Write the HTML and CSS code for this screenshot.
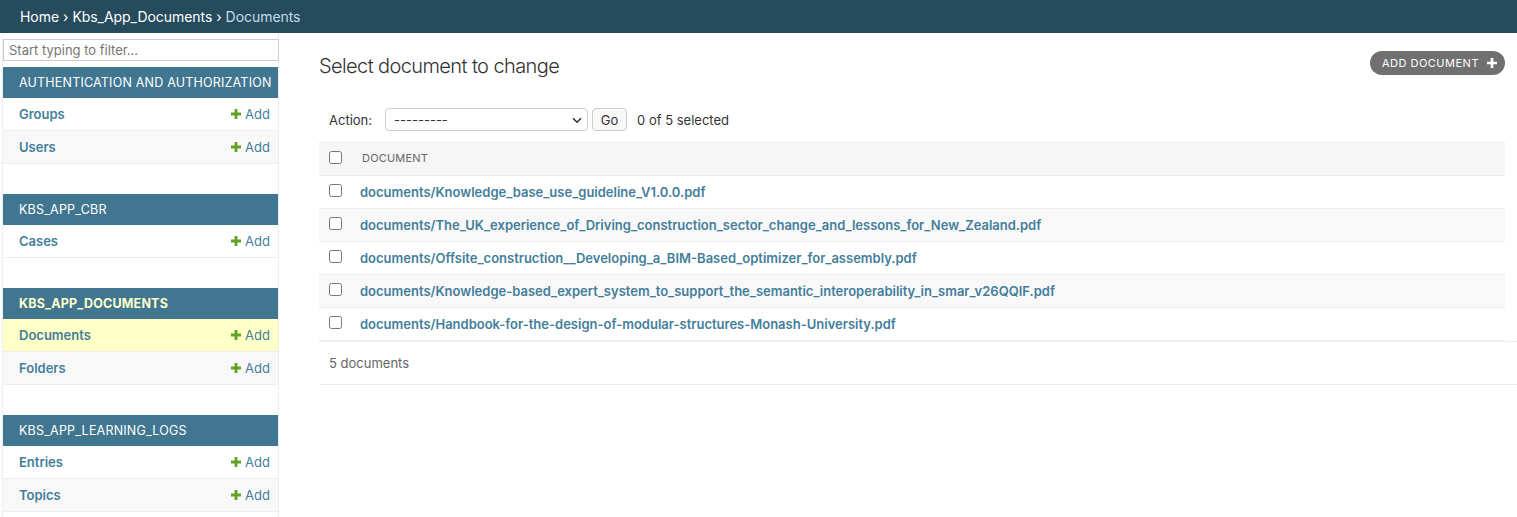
FILE: index.html
```html
<!DOCTYPE html>
<html lang="en">
<head>
<meta charset="utf-8">
<title>Select document to change</title>
<link rel="stylesheet" href="styles.css">
</head>
<body>
<nav class="breadcrumbs">
  <a href="#">Home</a><span class="sep">›</span><a href="#">Kbs_App_Documents</a><span class="sep">›</span><span class="here">Documents</span>
</nav>
<div class="main">
  <aside class="sidebar">
    <input class="nav-filter" type="search" placeholder="Start typing to filter...">
    <table class="module">
      <caption>Authentication and Authorization</caption>
      <tr><th><a href="#">Groups</a></th><td><a class="addlink" href="#"><svg width="10" height="10" viewBox="0 0 10 10"><path d="M3.6 0h2.8v3.6H10v2.8H6.4V10H3.6V6.4H0V3.6h3.6z" fill="#5fa225"/></svg>Add</a></td></tr>
      <tr class="alt"><th><a href="#">Users</a></th><td><a class="addlink" href="#"><svg width="10" height="10" viewBox="0 0 10 10"><path d="M3.6 0h2.8v3.6H10v2.8H6.4V10H3.6V6.4H0V3.6h3.6z" fill="#5fa225"/></svg>Add</a></td></tr>
    </table>
    <table class="module">
      <caption>Kbs_App_Cbr</caption>
      <tr><th><a href="#">Cases</a></th><td><a class="addlink" href="#"><svg width="10" height="10" viewBox="0 0 10 10"><path d="M3.6 0h2.8v3.6H10v2.8H6.4V10H3.6V6.4H0V3.6h3.6z" fill="#5fa225"/></svg>Add</a></td></tr>
    </table>
    <table class="module current-app">
      <caption>Kbs_App_Documents</caption>
      <tr class="current-model"><th><a href="#">Documents</a></th><td><a class="addlink" href="#"><svg width="10" height="10" viewBox="0 0 10 10"><path d="M3.6 0h2.8v3.6H10v2.8H6.4V10H3.6V6.4H0V3.6h3.6z" fill="#5fa225"/></svg>Add</a></td></tr>
      <tr class="alt"><th><a href="#">Folders</a></th><td><a class="addlink" href="#"><svg width="10" height="10" viewBox="0 0 10 10"><path d="M3.6 0h2.8v3.6H10v2.8H6.4V10H3.6V6.4H0V3.6h3.6z" fill="#5fa225"/></svg>Add</a></td></tr>
    </table>
    <table class="module">
      <caption>Kbs_App_Learning_Logs</caption>
      <tr><th><a href="#">Entries</a></th><td><a class="addlink" href="#"><svg width="10" height="10" viewBox="0 0 10 10"><path d="M3.6 0h2.8v3.6H10v2.8H6.4V10H3.6V6.4H0V3.6h3.6z" fill="#5fa225"/></svg>Add</a></td></tr>
      <tr class="alt"><th><a href="#">Topics</a></th><td><a class="addlink" href="#"><svg width="10" height="10" viewBox="0 0 10 10"><path d="M3.6 0h2.8v3.6H10v2.8H6.4V10H3.6V6.4H0V3.6h3.6z" fill="#5fa225"/></svg>Add</a></td></tr>
    </table>
  </aside>
  <main class="content">
    <div class="title-row">
      <h1>Select document to change</h1>
      <a class="object-add" href="#">Add document<svg width="10" height="10" viewBox="0 0 10 10"><path d="M3.7 0h2.6v3.7H10v2.6H6.3V10H3.7V6.3H0V3.7h3.7z" fill="#fff"/></svg></a>
    </div>
    <div class="actions">
      <label>Action:</label>
      <span class="select-wrap">
        <select><option>---------</option></select>
        <svg class="chev" width="10" height="7" viewBox="0 0 10 7"><path d="M1 1.2l4 4 4-4" fill="none" stroke="#333" stroke-width="1.6"/></svg>
      </span>
      <button class="go" type="button">Go</button>
      <span class="counter">0 of 5 selected</span>
    </div>
    <table class="result-list">
      <thead>
        <tr><th class="cb"><input type="checkbox"></th><th class="col">Document</th></tr>
      </thead>
      <tbody>
        <tr><td class="cb"><input type="checkbox"></td><th><a href="#">documents/Knowledge_base_use_guideline_V1.0.0.pdf</a></th></tr>
        <tr class="alt"><td class="cb"><input type="checkbox"></td><th><a href="#">documents/The_UK_experience_of_Driving_construction_sector_change_and_lessons_for_New_Zealand.pdf</a></th></tr>
        <tr><td class="cb"><input type="checkbox"></td><th><a href="#">documents/Offsite_construction__Developing_a_BIM-Based_optimizer_for_assembly.pdf</a></th></tr>
        <tr class="alt"><td class="cb"><input type="checkbox"></td><th><a href="#">documents/Knowledge-based_expert_system_to_support_the_semantic_interoperability_in_smar_v26QQIF.pdf</a></th></tr>
        <tr><td class="cb"><input type="checkbox"></td><th><a href="#">documents/Handbook-for-the-design-of-modular-structures-Monash-University.pdf</a></th></tr>
      </tbody>
    </table>
    <p class="paginator">5 documents</p>
  </main>
</div>
</body>
</html>
```

FILE: styles.css
```css
* { box-sizing: border-box; }
html, body { margin: 0; padding: 0; }
body {
  font-family: Inter, Roboto, "Liberation Sans", sans-serif;
  font-size: 14px;
  color: #333;
  background: #fff;
  height: 517px;
  overflow: hidden;
}
a { text-decoration: none; color: #447e9b; }

.breadcrumbs {
  height: 33px;
  background: #264b5d;
  color: #c4dce8;
  display: flex;
  align-items: center;
  padding: 0 20px;
  font-size: 14px;
  letter-spacing: -0.05px;
}
.breadcrumbs a { color: #fff; }
.breadcrumbs .sep { color: #fff; margin: 0 4px; }
.breadcrumbs .here { color: #c4dce8; }

.main { display: flex; height: 484px; }

.sidebar {
  margin-left: 2px;
  width: 277px;
  flex: none;
  border-left: 1px solid #eee;
  border-right: 1px solid #eee;
  padding-top: 6px;
}
.nav-filter {
  display: block;
  width: 276px;
  height: 22px;
  margin: 0 -1px 6px 0;
  padding: 2px 5px;
  border: 1px solid #ccc;
  background: #fff;
  font-family: inherit;
  font-size: 13px;
  color: #333;
  outline: none;
  border-radius: 0;
}
.nav-filter::placeholder { color: #757575; }

.module {
  width: 100%;
  table-layout: fixed;
  border-collapse: collapse;
  margin-bottom: 30px;
  font-size: 13px;
}
.module caption {
  background: #417690;
  color: #fff;
  text-align: left;
  text-transform: uppercase;
  letter-spacing: 0.2px;
  font-size: 12.5px;
  line-height: 15px;
  padding: 8px 4px 8px 16px;
  font-weight: 400;
  white-space: nowrap;
  overflow: hidden;
}
.module.current-app caption { color: #ffc; font-weight: 700; }
.module th, .module td {
  padding: 8px;
  line-height: 16px;
  border-bottom: 1px solid #eee;
  text-align: left;
}
.module th { padding-left: 16px; font-weight: 600; }
.module td { text-align: right; white-space: nowrap; }
.module tr.alt { background: #f8f8f8; }
.module tr.current-model { background: #ffffc8; }
.addlink { display: inline-flex; align-items: center; gap: 4px; font-weight: 400; }

.content {
  flex: 1;
  min-width: 0;
  padding: 20px 0 0 40px;
}
.title-row {
  display: flex;
  justify-content: space-between;
  align-items: flex-start;
  margin-right: 12px;
  margin-bottom: 20px;
}
.title-row h1 {
  margin: 0;
  font-size: 20px;
  line-height: 26px;
  font-weight: 300;
  letter-spacing: -0.6px;
  color: #333;
}
.object-add {
  margin-top: -2px;
  display: inline-flex;
  align-items: center;
  gap: 8px;
  height: 24px;
  padding: 0 8px 0 12px;
  background: #707070;
  color: #fff;
  border-radius: 15px;
  font-size: 11px;
  text-transform: uppercase;
  letter-spacing: 0.5px;
}

.actions {
  display: flex;
  align-items: center;
  padding: 9px 10px 11px;
  margin-right: 12px;
  font-size: 13px;
  color: #333;
}
.actions label { margin-right: 13px; color: #333; }
.select-wrap { position: relative; display: inline-block; }
.select-wrap select {
  appearance: none;
  -webkit-appearance: none;
  width: 203px;
  height: 23px;
  border: 1px solid #ccc;
  border-radius: 4px;
  background: #fff;
  font-family: inherit;
  font-size: 13px;
  color: #333;
  padding: 0 8px;
}
.select-wrap .chev { position: absolute; right: 6px; top: 9px; pointer-events: none; }
.go {
  margin-left: 4px;
  width: 35px;
  height: 23px;
  border: 1px solid #ccc;
  border-radius: 4px;
  background: #f8f8f8;
  font-family: inherit;
  font-size: 13px;
  color: #333;
  padding: 0;
}
.counter { margin-left: 10px; color: #333; }

.result-list {
  width: calc(100% - 12px);
  border-collapse: collapse;
  font-size: 13px;
}
.result-list th, .result-list td {
  padding: 8px;
  line-height: 16px;
  border-bottom: 1px solid #eee;
  text-align: left;
  vertical-align: top;
}
.result-list thead th {
  background: #f6f6f6;
  border-top: 1px solid #eee;
  font-size: 11px;
  font-weight: 400;
  color: #666;
  text-transform: uppercase;
  padding: 7px 8px 7px;
}
.result-list thead th.col { padding-left: 10px; letter-spacing: 0.2px; }
.result-list .cb { width: 33px; padding: 8px 0 8px 10px; }
.result-list .cb input { margin: 0; width: 13px; height: 13px; vertical-align: top; }
.result-list tbody th { font-weight: 600; }
.result-list tbody tr.alt { background: #f8f8f8; }

.paginator {
  margin: 0;
  padding: 10px;
  line-height: 22px;
  font-size: 13px;
  color: #666;
  border-top: 1px solid #eee;
  border-bottom: 1px solid #eee;
}
```
